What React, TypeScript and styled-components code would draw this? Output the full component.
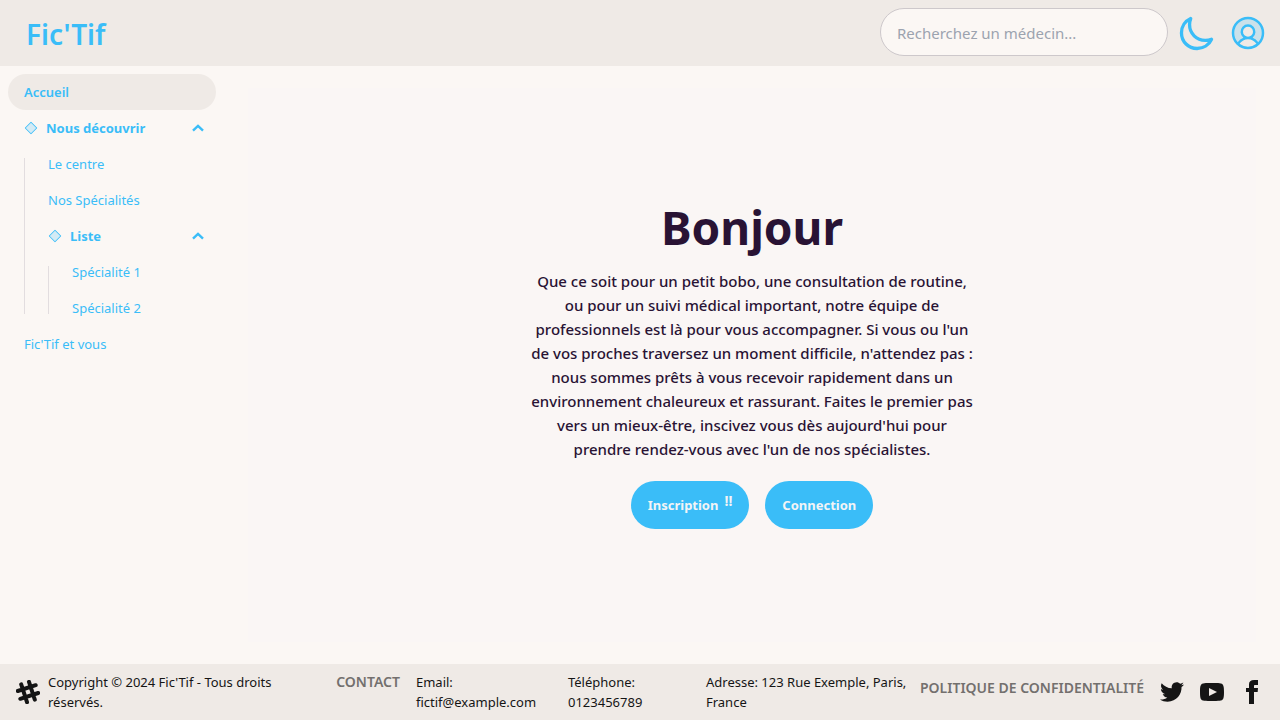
import React from "react";
import styled, { createGlobalStyle, css } from "styled-components";
import { PiUserCircleDuotone, PiDiamondDuotone } from "react-icons/pi";

const GlobalStyle = createGlobalStyle`
  *, *::before, *::after { box-sizing: border-box; }
  body {
    margin: 0;
    background: #fbf7f4;
    color: #291334;
    font-family: "Noto Sans", "Open Sans", sans-serif;
    font-size: 16px;
    line-height: 24px;
  }
  ul { list-style: none; margin: 0; padding: 0; }
  h1, p { margin: 0; }
  a { color: inherit; text-decoration: none; }
  button { font: inherit; border: 0; background: none; cursor: pointer; }
  svg { display: block; flex-shrink: 0; }
`;

const Page = styled.div`
  display: flex;
  flex-direction: column;
  min-height: 100vh;
`;

const Header = styled.header`
  display: flex;
  align-items: center;
  justify-content: space-between;
  height: 66px;
  padding: 0 16px 0 8px;
  background: #efeae6;
`;

const Brand = styled.a`
  padding: 2px 18px 0;
  font-size: 28px;
  line-height: 36px;
  font-weight: 600;
  && { color: #3abdf8; }
`;

const HeaderTools = styled.div`
  display: flex;
  align-items: center;
  gap: 8px;
  color: #3abdf8;
`;

const Search = styled.input`
  width: 288px;
  height: 48px;
  margin: 0 0 2px;
  padding: 2px 16px 0;
  border: 1px solid #cdc8cb;
  border-radius: 24px;
  background: #fbf7f4;
  color: #291334;
  font: inherit;
  font-size: 15px;
  &::placeholder { color: #9ca3af; opacity: 1; }
`;

const IconButton = styled.button`
  display: flex;
  align-items: center;
  justify-content: center;
  width: 40px;
  height: 40px;
  padding: 0;
  color: inherit;
`;

const Tools = styled.div`
  display: flex;
  gap: 12px;
  margin-right: -4px;
`;

const Body = styled.div`
  display: flex;
  flex: 1;
`;

const Sidebar = styled.nav`
  width: 224px;
  flex-shrink: 0;
  padding: 8px;
  color: #3abdf8;
  font-size: 13px;
  line-height: 20px;
`;

const itemStyle = css`
  display: flex;
  align-items: center;
  gap: 8px;
  width: 100%;
  height: 36px;
  padding: 0 12px 0 16px;
  border-radius: 18px;
  color: inherit;
`;

const NavLink = styled.a<{ $active?: boolean }>`
  ${itemStyle}
  background: ${(p) => (p.$active ? "#efeae6" : "transparent")};
  font-weight: ${(p) => (p.$active ? 600 : 400)};
`;

const NavToggle = styled.button`
  && {
    ${itemStyle}
    font-weight: 700;
  }
`;

const ToggleLabel = styled.span`
  flex: 1;
  text-align: left;
`;

const SubMenu = styled.ul`
  position: relative;
  margin-left: 16px;
  padding-left: 8px;
  &::before {
    content: "";
    position: absolute;
    left: 0;
    top: 12px;
    bottom: 12px;
    width: 1px;
    background: #e2dddf;
  }
`;

const Main = styled.main`
  flex: 1;
  display: flex;
  padding: 22px 24px;
`;

const Hero = styled.section`
  flex: 1;
  display: flex;
  flex-direction: column;
  align-items: center;
  justify-content: center;
  background: #faf6f5;
  text-align: center;
`;

const Title = styled.h1`
  font-size: 46px;
  line-height: 52px;
  font-weight: 700;
`;

const Intro = styled.p`
  max-width: 448px;
  padding: 16px 0 20px;
  font-size: 15px;
  font-weight: 500;
`;

const Actions = styled.div`
  display: flex;
  gap: 16px;
`;

const PillButton = styled.button`
  && {
    display: flex;
    align-items: center;
    gap: 6px;
    height: 48px;
    padding: 0 17px;
    border-radius: 24px;
    background: #3abdf8;
    color: #f3f4f6;
    font-size: 13px;
    font-weight: 700;
  }
`;

const Marks = styled.span`
  align-self: flex-start;
  padding-top: 8px;
  font-size: 14px;
`;

const Footer = styled.footer`
  display: flex;
  align-items: center;
  min-height: 56px;
  padding: 0 16px;
  background: #efeae6;
  color: #151515;
  font-size: 13px;
  line-height: 20px;
`;

const Copyright = styled.p`
  width: 248px;
  margin-left: 8px;
`;

const FooterTitle = styled.span`
  margin: 0 16px 20px 0;
  color: #73706e;
  font-size: 14px;
  font-weight: 600;
  white-space: nowrap;
`;

const Contact = styled.address`
  display: flex;
  align-items: center;
  margin-left: auto;
  font-style: normal;
`;

const ContactText = styled.p<{ $width: number }>`
  width: ${(p) => p.$width}px;
  padding-right: 10px;
`;

const PolicyLink = styled.a`
  margin-bottom: 8px;
  && { color: #73706e; }
  font-size: 14px;
  font-weight: 600;
  white-space: nowrap;
`;

const Socials = styled.div`
  display: flex;
  gap: 16px;
  margin-left: 16px;
`;

const Moon = () => (
  <svg width="37" height="37" viewBox="0 0 512 512" fill="none" stroke="currentColor" strokeWidth="46" strokeLinejoin="round">
    <path d="M160 136c0-30.62 4.51-61.61 16-88C99.57 81.27 48 159.32 48 248c0 119.29 96.71 216 216 216 88.68 0 166.73-51.57 200-128-26.39 11.49-57.38 16-88 16-119.29 0-216-96.71-216-216z" />
  </svg>
);

const Chevron = () => (
  <svg width="12" height="12" viewBox="0 0 12 12" fill="none" stroke="currentColor" strokeWidth="2.4">
    <path d="M1 8.6 6 3.8l5 4.8" />
  </svg>
);

const HashLogo = () => (
  <svg width="24" height="24" viewBox="0 0 24 24" fill="none" stroke="currentColor" strokeWidth="4" strokeLinecap="round">
    <g transform="rotate(-18 12 12)">
      <path d="M7.9 2.6v18.8M16.1 2.6v18.8M2.6 7.9h18.8M2.6 16.1h18.8" />
    </g>
  </svg>
);

const socials = [
  {
    name: "Twitter",
    d: "M24 4.557c-.883.392-1.832.656-2.828.775 1.017-.609 1.798-1.574 2.165-2.724-.951.564-2.005.974-3.127 1.195-.897-.957-2.178-1.555-3.594-1.555-3.179 0-5.515 2.966-4.797 6.045-4.091-.205-7.719-2.165-10.148-5.144-1.29 2.213-.669 5.108 1.523 6.574-.806-.026-1.566-.247-2.229-.616-.054 2.281 1.581 4.415 3.949 4.89-.693.188-1.452.232-2.224.084.626 1.956 2.444 3.379 4.6 3.419-2.07 1.623-4.678 2.348-7.29 2.04 2.179 1.397 4.768 2.212 7.548 2.212 9.142 0 14.307-7.721 13.995-14.646.962-.695 1.797-1.562 2.457-2.549z",
  },
  {
    name: "YouTube",
    d: "M19.615 3.184c-3.604-.246-11.631-.245-15.23 0-3.897.266-4.356 2.62-4.385 8.816.029 6.185.484 8.549 4.385 8.816 3.6.245 11.626.246 15.23 0 3.897-.266 4.356-2.62 4.385-8.816-.029-6.185-.484-8.549-4.385-8.816zm-10.615 12.816v-8l8 3.993-8 4.007z",
  },
  {
    name: "Facebook",
    d: "M9 8h-3v4h3v12h5v-12h3.642l.358-4h-4v-1.667c0-.955.192-1.333 1.115-1.333h2.885v-5h-3.808c-3.596 0-5.192 1.583-5.192 4.615v3.385z",
  },
];

export default function App() {
  return (
    <Page>
      <GlobalStyle />
      <Header>
        <Brand href="#">Fic'Tif</Brand>
        <HeaderTools>
          <Search type="search" aria-label="Rechercher un médecin" placeholder="Recherchez un médecin..." />
          <Tools>
            <IconButton aria-label="Mode sombre"><Moon /></IconButton>
            <IconButton aria-label="Mon compte"><PiUserCircleDuotone size={40} /></IconButton>
          </Tools>
        </HeaderTools>
      </Header>
      <Body>
        <Sidebar aria-label="Navigation">
          <ul>
            <li><NavLink href="#" $active>Accueil</NavLink></li>
            <li>
              <NavToggle aria-expanded="true">
                <PiDiamondDuotone size={14} />
                <ToggleLabel>Nous découvrir</ToggleLabel>
                <Chevron />
              </NavToggle>
              <SubMenu>
                <li><NavLink href="#">Le centre</NavLink></li>
                <li><NavLink href="#">Nos Spécialités</NavLink></li>
                <li>
                  <NavToggle aria-expanded="true">
                    <PiDiamondDuotone size={14} />
                    <ToggleLabel>Liste</ToggleLabel>
                    <Chevron />
                  </NavToggle>
                  <SubMenu>
                    <li><NavLink href="#">Spécialité 1</NavLink></li>
                    <li><NavLink href="#">Spécialité 2</NavLink></li>
                  </SubMenu>
                </li>
              </SubMenu>
            </li>
            <li><NavLink href="#">Fic'Tif et vous</NavLink></li>
          </ul>
        </Sidebar>
        <Main>
          <Hero>
            <Title>Bonjour</Title>
            <Intro>
              Que ce soit pour un petit bobo, une consultation de routine, ou pour un suivi médical
              important, notre équipe de professionnels est là pour vous accompagner. Si vous ou l'un
              de vos proches traversez un moment difficile, n'attendez pas : nous sommes prêts à vous
              recevoir rapidement dans un environnement chaleureux et rassurant. Faites le premier pas
              vers un mieux-être, inscivez vous dès aujourd'hui pour prendre rendez-vous avec l'un de
              nos spécialistes.
            </Intro>
            <Actions>
              <PillButton>Inscription<Marks>!!</Marks></PillButton>
              <PillButton>Connection</PillButton>
            </Actions>
          </Hero>
        </Main>
      </Body>
      <Footer>
        <HashLogo />
        <Copyright>Copyright © 2024 Fic'Tif - Tous droits réservés.</Copyright>
        <Contact>
          <FooterTitle>CONTACT</FooterTitle>
          <ContactText $width={152}>Email: fictif@example.com</ContactText>
          <ContactText $width={138}>Téléphone: 0123456789</ContactText>
          <ContactText $width={214}>Adresse: 123 Rue Exemple, Paris, France</ContactText>
        </Contact>
        <PolicyLink href="#">POLITIQUE DE CONFIDENTIALITÉ</PolicyLink>
        <Socials>
          {socials.map((s) => (
            <a key={s.name} href="#" aria-label={s.name}>
              <svg width="24" height="24" viewBox="0 0 24 24" fill="currentColor"><path d={s.d} /></svg>
            </a>
          ))}
        </Socials>
      </Footer>
    </Page>
  );
}
